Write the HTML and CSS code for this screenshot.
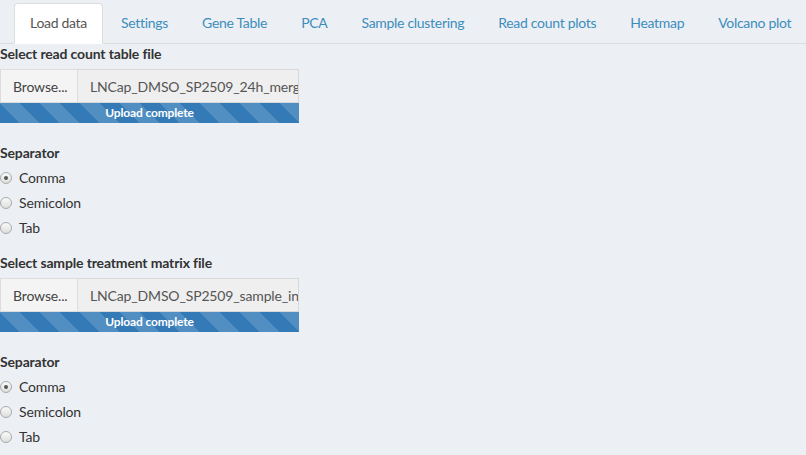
FILE: index.html
```html
<!DOCTYPE html>
<html>
<head>
<meta charset="utf-8">
<link rel="stylesheet" href="styles.css">
</head>
<body>
<ul class="tabs">
  <li class="tab active"><a>Load data</a></li>
  <li class="tab"><a>Settings</a></li>
  <li class="tab"><a>Gene Table</a></li>
  <li class="tab"><a>PCA</a></li>
  <li class="tab"><a>Sample clustering</a></li>
  <li class="tab"><a>Read count plots</a></li>
  <li class="tab"><a>Heatmap</a></li>
  <li class="tab"><a>Volcano plot</a></li>
</ul>
<div class="content">
  <div class="group">
    <label class="label">Select read count table file</label>
    <div class="file">
      <span class="browse">Browse...</span>
      <span class="fname">LNCap_DMSO_SP2509_24h_merged_read_counts.csv</span>
    </div>
    <div class="progress">Upload complete</div>
  </div>
  <div class="group radios">
    <label class="label">Separator</label>
    <div class="radio"><span class="dot checked"></span>Comma</div>
    <div class="radio"><span class="dot"></span>Semicolon</div>
    <div class="radio"><span class="dot"></span>Tab</div>
  </div>
  <div class="group">
    <label class="label">Select sample treatment matrix file</label>
    <div class="file">
      <span class="browse">Browse...</span>
      <span class="fname">LNCap_DMSO_SP2509_sample_info.csv</span>
    </div>
    <div class="progress">Upload complete</div>
  </div>
  <div class="group radios">
    <label class="label">Separator</label>
    <div class="radio"><span class="dot checked"></span>Comma</div>
    <div class="radio"><span class="dot"></span>Semicolon</div>
    <div class="radio"><span class="dot"></span>Tab</div>
  </div>
</div>
</body>
</html>
```
FILE: styles.css
```css
html, body {
  margin: 0;
  padding: 0;
  background: #ecf0f5;
  font-family: "Lato", "Open Sans", sans-serif;
  font-size: 14px;
  line-height: 20px;
  letter-spacing: -0.15px;
  color: #333;
  overflow: hidden;
}
.tabs {
  list-style: none;
  margin: 3px 0 0 0;
  padding: 0 0 0 14px;
  display: flex;
  border-bottom: 1px solid #dddddd;
  height: 40px;
  white-space: nowrap;
}
.tab {
  flex: none;
  margin-right: 2px;
  margin-bottom: -1px;
}
.tab a {
  display: block;
  padding: 9px 15px 11px;
  color: #3c8dbc;
  border: 1px solid transparent;
  border-radius: 4px 4px 0 0;
  line-height: 19px;
  letter-spacing: -0.3px;
}
.tab.active a {
  background: #fff;
  border-color: #dddddd #dddddd transparent;
  color: #555;
}
.content {
  width: 299px;
}
.group {
  margin-bottom: 20px;
}
.group.radios {
  margin-bottom: 15px;
}
.label {
  display: block;
  font-weight: 700;
  margin-bottom: 5px;
}
.file {
  display: flex;
  height: 34px;
  box-sizing: border-box;
}
.browse {
  flex: none;
  width: 78px;
  box-sizing: border-box;
  padding: 7px 12px;
  background: #f4f4f4;
  border: 1px solid #dddddd;
  color: #444;
}
.fname {
  flex: 1;
  min-width: 0;
  overflow: hidden;
  white-space: nowrap;
  padding: 7px 12px;
  background: #efefef;
  border: 1px solid #d8d8d8;
  border-left: none;
  color: #555;
}
.progress {
  height: 20px;
  background-color: #337ab7;
  background-image: linear-gradient(45deg, rgba(255,255,255,.15) 25%, transparent 25%, transparent 50%, rgba(255,255,255,.15) 50%, rgba(255,255,255,.15) 75%, transparent 75%, transparent);
  background-size: 40px 40px;
  color: #fff;
  font-size: 12px;
  font-weight: 700;
  text-align: center;
  line-height: 20px;
}
.radio {
  display: flex;
  align-items: center;
  margin-bottom: 5px;
  height: 20px;
}
.dot {
  width: 12px;
  height: 12px;
  box-sizing: border-box;
  border-radius: 50%;
  border: 1px solid #aaaaaa;
  background: linear-gradient(#fafafa, #dedede);
  margin-right: 7px;
  position: relative;
}
.dot.checked::after {
  content: "";
  position: absolute;
  left: 3px;
  top: 3px;
  width: 4px;
  height: 4px;
  border-radius: 50%;
  background: #555;
}
```
